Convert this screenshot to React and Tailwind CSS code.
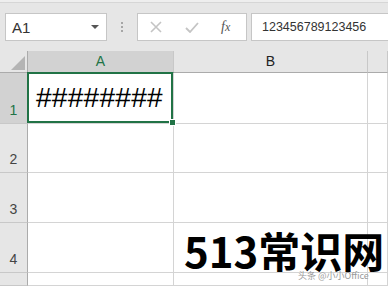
export default function App() {
  const hdr = "bg-[#e6e6e6] border-r border-b border-r-[#c8c8c8] border-b-[#ababab]";
  const rowHdr = "bg-[#e6e6e6] border-r border-b border-r-[#ababab] border-b-[#c8c8c8] flex items-end justify-center pb-[6px] text-[14px] leading-none text-[#444]";
  const cell = "bg-white border-r border-b border-[#d4d4d4]";
  return (
    <div className="relative w-[388px] h-[286px] overflow-hidden bg-white font-['Noto_Sans','Liberation_Sans',sans-serif]">
      {/* toolbar */}
      <div className="h-[51px] bg-[#e6e6e6] flex flex-col">
        <div className="h-[2px] bg-[#eeeeee] border-b border-[#d6d6d6] box-content" />
        <div className="flex items-start pt-[10px] pl-[5px]">
          <div className="w-[102px] h-[28px] bg-white border border-[#c6c6c6] flex items-center pl-[6px] pr-[6px]">
            <span className="text-[15px] text-[#333] leading-none font-['Liberation_Sans',sans-serif]">A1</span>
            <span className="ml-auto mr-[1px] w-0 h-0 border-l-[4px] border-r-[4px] border-t-[4px] border-l-transparent border-r-transparent border-t-[#555]" />
          </div>
          <div className="w-[30px] h-[28px] flex flex-col items-center justify-center gap-[2px]">
            <span className="w-[2px] h-[2px] bg-[#a6a6a6]" />
            <span className="w-[2px] h-[2px] bg-[#a6a6a6]" />
            <span className="w-[2px] h-[2px] bg-[#a6a6a6]" />
          </div>
          <div className="w-[110px] h-[28px] bg-white border border-[#c6c6c6] flex items-center">
            <svg width="12" height="12" viewBox="0 0 12 12" className="ml-[12px]">
              <path d="M1 1 L11 11 M11 1 L1 11" stroke="#c4c4c4" strokeWidth="1.6" fill="none" />
            </svg>
            <svg width="14" height="11" viewBox="0 0 14 11" className="ml-[23px]">
              <path d="M1 6 L5 10 L13 1" stroke="#c4c4c4" strokeWidth="1.8" fill="none" />
            </svg>
            <span className="ml-[22px] text-[14px] italic text-[#555] font-['Liberation_Serif',serif] leading-none">
              f<span className="text-[12px]">x</span>
            </span>
          </div>
          <div className="ml-[4px] flex-1 h-[28px] bg-white border border-r-0 border-[#c6c6c6] flex items-center pl-[10px]">
            <span className="text-[12.5px] text-[#333] leading-none font-['Liberation_Sans',sans-serif]">123456789123456</span>
          </div>
        </div>
      </div>

      {/* grid */}
      <div className="grid grid-cols-[28px_146px_194px_1fr] grid-rows-[22px_51px_49px_50px_50px_1fr] h-[235px] font-['Liberation_Sans',sans-serif]">
        {/* header row */}
        <div className="bg-[#e6e6e6] border-r border-b border-r-[#ababab] border-b-[#ababab] relative">
          <svg width="14" height="14" viewBox="0 0 14 14" className="absolute right-[2px] bottom-[2px]">
            <path d="M0 14 L14 14 L14 0 Z" fill="#b4b4b4" />
          </svg>
        </div>
        <div className="bg-[#d2d2d2] border-r border-b border-r-[#c8c8c8] border-b-[#217346] flex items-center justify-center text-[14px] text-[#217346]">A</div>
        <div className={hdr + " flex items-center justify-center text-[14px] text-[#222]"}>B</div>
        <div className={hdr} />

        {/* row 1 */}
        <div className={rowHdr.replace("bg-[#e6e6e6]", "bg-[#d2d2d2]") + " text-[#217346]"}>1</div>
        <div className={cell + " relative flex items-center pl-[8px]"}>
          <span className="text-[28px] text-black leading-none tracking-[0.3px]">########</span>
          <div className="absolute -left-[1px] -top-[1px] right-0 bottom-0 border-2 border-[#217346] pointer-events-none" />
          <div className="absolute -right-[3px] -bottom-[3px] w-[7px] h-[7px] bg-[#217346] border border-white" />
        </div>
        <div className={cell} />
        <div className={cell} />

        {/* row 2 */}
        <div className={rowHdr}>2</div>
        <div className={cell} />
        <div className={cell} />
        <div className={cell} />

        {/* row 3 */}
        <div className={rowHdr}>3</div>
        <div className={cell} />
        <div className={cell} />
        <div className={cell} />

        {/* row 4 */}
        <div className={rowHdr}>4</div>
        <div className={cell} />
        <div className={cell} />
        <div className={cell} />

        {/* row 5 */}
        <div className={rowHdr} />
        <div className={cell} />
        <div className={cell} />
        <div className={cell} />
      </div>

      {/* watermark */}
      <div className="absolute left-[184px] top-[229px] text-[42px] font-bold text-black leading-none font-['Noto_Sans_CJK_SC',sans-serif] whitespace-nowrap">
        513常识网
      </div>
      <div className="absolute left-[298px] top-[271px] text-[9px] text-[#9a9a9a] leading-none font-['Noto_Sans_CJK_SC',sans-serif] whitespace-nowrap">
        头条 @小小Office
      </div>
    </div>
  );
}
